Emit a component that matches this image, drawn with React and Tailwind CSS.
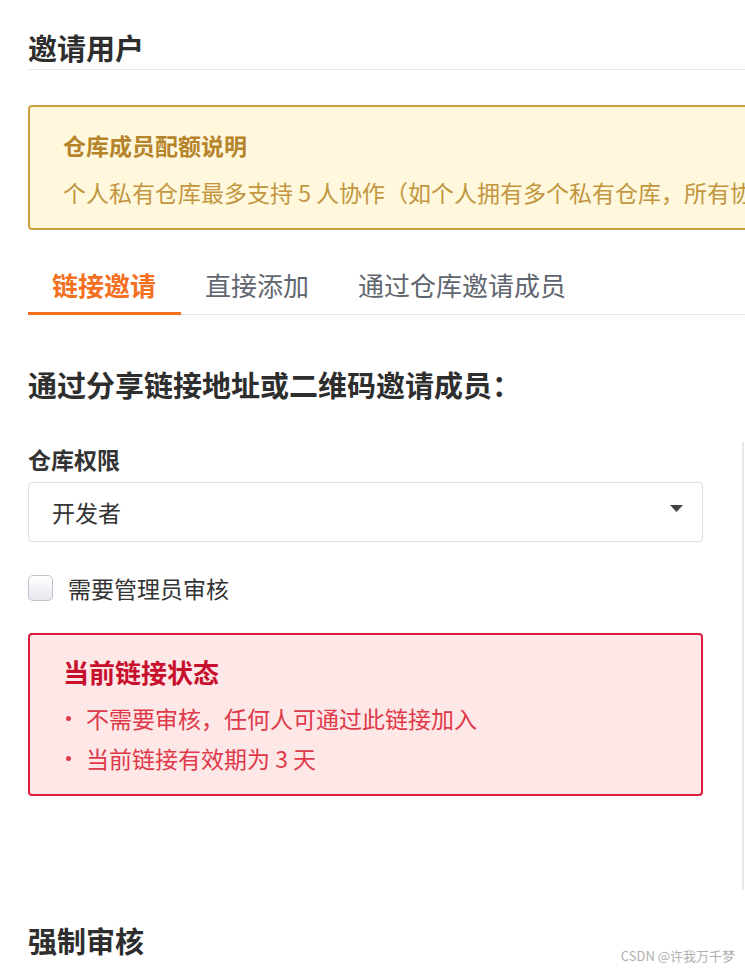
export default function App() {
  const tabs = [
    { label: "链接邀请", active: true },
    { label: "直接添加", active: false },
    { label: "通过仓库邀请成员", active: false },
  ]

  return (
    <div
      className="relative w-[745px] h-[971px] overflow-hidden bg-white text-[#333]"
      style={{ fontFamily: '"Noto Sans CJK SC", "Noto Sans", sans-serif' }}
    >
      <div className="w-[1100px] pl-[28px]">
        {/* page title */}
        <h1 className="mt-[25px] border-b border-[#e4e6ea] text-[29px] font-bold leading-[44px] text-[#2e2e2e]">
          邀请用户
        </h1>

        {/* quota notice */}
        <div className="mt-[35px] w-[1000px] rounded-[4px] border-2 border-[#c9a043] bg-[#fff8dc] pl-[33px] pt-[21px] pb-[19px]">
          <div className="text-[23px] font-bold leading-[34px] text-[#b5842b]">仓库成员配额说明</div>
          <div className="mt-[13px] whitespace-nowrap text-[23px] leading-[34px] text-[#c2963f]">
            个人私有仓库最多支持 5 人协作（如个人拥有多个私有仓库，所有协作者合计不超过 5 人）
          </div>
        </div>

        {/* tabs */}
        <div className="mt-[35px] flex border-b border-[#e4e7ed]">
          {tabs.map((t) => (
            <div
              key={t.label}
              className={
                t.active
                  ? "-mb-px pl-6 pr-[25px] pb-[8px] text-[26px] font-bold leading-[39px] text-[#f4701f] border-b-[3px] border-[#f4701f]"
                  : "-mb-px pl-6 pr-[25px] pb-[8px] text-[26px] leading-[39px] text-[#5f6670] border-b-[3px] border-transparent"
              }
            >
              {t.label}
            </div>
          ))}
        </div>

        <h2 className="mt-[47px] text-[29px] font-bold leading-[44px] text-[#2e2e2e]">通过分享链接地址或二维码邀请成员：</h2>

        {/* form row with side rail */}
        <div className="mt-[36px] flex">
          <div className="w-[675px] pb-[94px]">
            <div className="text-[23px] font-bold leading-[34px]">仓库权限</div>
            <div className="mt-[6px] flex h-[60px] items-center justify-between rounded-[4px] border border-[#dcdfe6] pl-[23px] pr-[19px]">
              <span className="text-[23px] leading-[34px] text-[#333]">开发者</span>
              <svg width="13" height="7" viewBox="0 0 13 7" className="-mt-[7px]">
                <path d="M0 0h13L6.5 7z" fill="#444" />
              </svg>
            </div>

            <label className="mt-[29px] flex items-center gap-[15px]">
              <span className="h-[26px] w-[25px] rounded-[5px] border border-[#c0c4cc] bg-gradient-to-b from-white to-[#e6e8ee]" />
              <span className="text-[23px] leading-[34px] text-[#333]">需要管理员审核</span>
            </label>

            <div className="mt-[28px] rounded-[4px] border-2 border-[#dc1f3c] bg-[#fde7e7] pl-[33px] pt-[17px] pb-[16px]">
              <div className="text-[26px] font-bold leading-[39px] text-[#c8102e]">当前链接状态</div>
              <ul className="mt-[7px]">
                {["不需要审核，任何人可通过此链接加入", "当前链接有效期为 3 天"].map((s) => (
                  <li key={s} className="flex items-center text-[23px] leading-[40px] text-[#e0394a]">
                    <span className="flex w-[23px]">
                      <span className="ml-[3px] h-[5px] w-[5px] rounded-full bg-[#e0394a]" />
                    </span>
                    {s}
                  </li>
                ))}
              </ul>
            </div>
          </div>
          <div className="ml-[39px] w-[2px] bg-[#e6e8eb]" />
        </div>

        <h2 className="mt-[28px] text-[29px] font-bold leading-[44px] text-[#2e2e2e]">强制审核</h2>
      </div>

      <div className="absolute right-[10px] bottom-[5px] text-[13px] leading-[20px] text-[#b0b0b0]">
        CSDN @许我万千梦
      </div>
    </div>
  )
}
